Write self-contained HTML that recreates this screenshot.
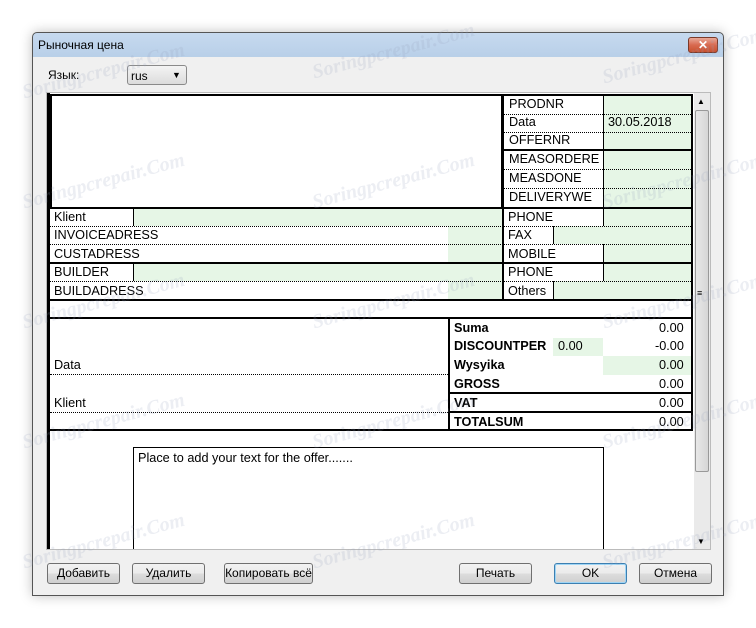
<!DOCTYPE html>
<html><head><meta charset="utf-8"><style>
*{margin:0;padding:0;box-sizing:border-box}
body{width:756px;height:628px;background:#fff;position:relative;overflow:hidden;font-family:"Liberation Sans",Arial,sans-serif;font-size:12.7px;color:#000}
.a{position:absolute}
.win{left:32px;top:32px;width:692px;height:564px;border:1px solid #555;border-radius:5px 5px 0 0;background:linear-gradient(#c6d9ef,#b8cfe8 25px,#f0f0f0 25px);box-shadow:0 0 12px rgba(0,0,0,.25)}
.t{position:absolute;white-space:nowrap;line-height:14px}
.g{position:absolute;background:#e6f6e6}
.hl{position:absolute;background:#000}
.dl{position:absolute;height:0;border-top:1px dotted #000}
.btn{position:absolute;top:563px;height:21px;border:1px solid #707070;border-radius:3px;background:linear-gradient(#f2f2f2,#ebebeb 50%,#dddddd 50%,#cfcfcf);text-align:center;line-height:19px;font-size:12px}
.wm{position:absolute;color:rgba(150,160,190,.18);font:italic bold 20px "Liberation Serif",serif;transform:rotate(-15deg);white-space:nowrap}
.b{font-weight:bold}
</style></head><body>
<div class="a win"></div>
<div class="t" style="left:38px;top:38px;font-size:12px">Рыночная цена</div>
<div class="a" style="left:688px;top:37px;width:30px;height:16px;border:1px solid #7a3a2a;border-radius:3px;background:linear-gradient(#e8a898,#d86a50 50%,#c8502e);color:#fff;font-weight:bold;text-align:center;line-height:14px;font-size:12px">✕</div>
<div class="a" style="left:33px;top:57px;width:690px;height:538px;background:#f0f0f0"></div>
<div class="t" style="left:48px;top:68px;font-size:12px">Язык:</div>
<div class="a" style="left:127px;top:65px;width:60px;height:20px;border:1px solid #8a8a8a;border-radius:3px;background:linear-gradient(#f4f4f4,#dcdcdc)"></div>
<div class="t" style="left:131px;top:69px;font-size:12px">rus</div>
<div class="t" style="left:172px;top:68px;font-size:9px">▼</div>
<div class="a" style="left:46px;top:92px;width:665px;height:458px;border:1px solid #bbb;background:#fff"></div>
<div class="a" style="left:694px;top:93px;width:16px;height:456px;background:#eaeaea"></div>
<div class="a" style="left:695px;top:110px;width:14px;height:362px;border:1px solid #999;border-radius:2px;background:linear-gradient(90deg,#e8e8e8,#d6d6d6)"></div>
<div class="t" style="left:697px;top:95px;font-size:8px">▲</div>
<div class="t" style="left:697px;top:535px;font-size:8px">▼</div>
<div class="t" style="left:697px;top:286px;font-size:9px">≡</div>
<div class="hl" style="left:47px;top:93px;width:3px;height:456px"></div>
<div class="a" style="left:50px;top:94px;width:453px;height:115px;border:2px solid #000;background:#fff"></div>
<div class="g" style="left:604px;top:95px;width:88px;height:112px"></div>
<div class="hl" style="left:502px;top:94px;width:2px;height:207px"></div>
<div class="hl" style="left:603px;top:95px;width:1px;height:112px"></div>
<div class="hl" style="left:691px;top:94px;width:2px;height:207px"></div>
<div class="hl" style="left:502px;top:94px;width:191px;height:2px"></div>
<div class="dl" style="left:504px;top:114px;width:187px"></div>
<div class="dl" style="left:504px;top:132px;width:187px"></div>
<div class="hl" style="left:502px;top:149px;width:191px;height:2px"></div>
<div class="dl" style="left:504px;top:169px;width:187px"></div>
<div class="dl" style="left:504px;top:188px;width:187px"></div>
<div class="t" style="left:509px;top:97px">PRODNR</div>
<div class="t" style="left:509px;top:115px">Data</div>
<div class="t" style="left:608px;top:115px">30.05.2018</div>
<div class="t" style="left:509px;top:133px">OFFERNR</div>
<div class="t" style="left:509px;top:152px">MEASORDERE</div>
<div class="t" style="left:509px;top:171px">MEASDONE</div>
<div class="t" style="left:509px;top:190px">DELIVERYWE</div>
<div class="hl" style="left:50px;top:207px;width:643px;height:2px"></div>
<div class="g" style="left:134px;top:209px;width:368px;height:17px"></div>
<div class="g" style="left:448px;top:226px;width:54px;height:36px"></div>
<div class="g" style="left:134px;top:264px;width:368px;height:17px"></div>
<div class="g" style="left:448px;top:281px;width:54px;height:18px"></div>
<div class="g" style="left:604px;top:209px;width:87px;height:17px"></div>
<div class="g" style="left:554px;top:226px;width:137px;height:18px"></div>
<div class="g" style="left:604px;top:244px;width:87px;height:18px"></div>
<div class="g" style="left:604px;top:264px;width:87px;height:17px"></div>
<div class="g" style="left:554px;top:281px;width:137px;height:18px"></div>
<div class="hl" style="left:133px;top:209px;width:1px;height:17px"></div>
<div class="hl" style="left:133px;top:264px;width:1px;height:17px"></div>
<div class="hl" style="left:603px;top:209px;width:1px;height:17px"></div>
<div class="hl" style="left:553px;top:226px;width:1px;height:18px"></div>
<div class="hl" style="left:603px;top:244px;width:1px;height:18px"></div>
<div class="hl" style="left:603px;top:264px;width:1px;height:17px"></div>
<div class="hl" style="left:553px;top:281px;width:1px;height:18px"></div>
<div class="dl" style="left:50px;top:226px;width:641px"></div>
<div class="dl" style="left:50px;top:244px;width:641px"></div>
<div class="hl" style="left:50px;top:262px;width:643px;height:2px"></div>
<div class="dl" style="left:50px;top:281px;width:641px"></div>
<div class="hl" style="left:50px;top:299px;width:643px;height:2px"></div>
<div class="t" style="left:54px;top:210px">Klient</div>
<div class="t" style="left:54px;top:228px">INVOICEADRESS</div>
<div class="t" style="left:54px;top:247px">CUSTADRESS</div>
<div class="t" style="left:54px;top:265px">BUILDER</div>
<div class="t" style="left:54px;top:284px">BUILDADRESS</div>
<div class="t" style="left:508px;top:210px">PHONE</div>
<div class="t" style="left:508px;top:228px">FAX</div>
<div class="t" style="left:508px;top:247px">MOBILE</div>
<div class="t" style="left:508px;top:265px">PHONE</div>
<div class="t" style="left:508px;top:284px">Others</div>
<div class="hl" style="left:691px;top:300px;width:2px;height:131px"></div>
<div class="hl" style="left:50px;top:317px;width:643px;height:2px"></div>
<div class="t" style="left:54px;top:358px">Data</div>
<div class="dl" style="left:50px;top:374px;width:398px"></div>
<div class="t" style="left:54px;top:396px">Klient</div>
<div class="dl" style="left:50px;top:412px;width:398px"></div>
<div class="hl" style="left:448px;top:318px;width:2px;height:113px"></div>
<div class="g" style="left:553px;top:338px;width:50px;height:18px"></div>
<div class="g" style="left:603px;top:356px;width:88px;height:19px"></div>
<div class="t b" style="left:454px;top:321px">Suma</div>
<div class="t" style="left:659px;top:321px">0.00</div>
<div class="t b" style="left:454px;top:339px">DISCOUNTPER</div>
<div class="t" style="left:558px;top:339px">0.00</div>
<div class="t" style="left:655px;top:339px">-0.00</div>
<div class="t b" style="left:454px;top:358px">Wysyika</div>
<div class="t" style="left:659px;top:358px">0.00</div>
<div class="t b" style="left:454px;top:377px">GROSS</div>
<div class="t" style="left:659px;top:377px">0.00</div>
<div class="hl" style="left:448px;top:392px;width:245px;height:2px"></div>
<div class="t b" style="left:454px;top:396px">VAT</div>
<div class="t" style="left:659px;top:396px">0.00</div>
<div class="hl" style="left:448px;top:411px;width:245px;height:2px"></div>
<div class="t b" style="left:454px;top:415px">TOTALSUM</div>
<div class="t" style="left:659px;top:415px">0.00</div>
<div class="hl" style="left:50px;top:429px;width:643px;height:2px"></div>
<div class="a" style="left:133px;top:447px;width:471px;height:102px;border:1px solid #000;border-bottom:none;background:#fff"></div>
<div class="t" style="left:138px;top:451px">Place to add your text for the offer.......</div>
<div class="btn" style="left:47px;width:73px">Добавить</div>
<div class="btn" style="left:132px;width:73px">Удалить</div>
<div class="btn" style="left:224px;width:89px">Копировать всё</div>
<div class="btn" style="left:459px;width:73px">Печать</div>
<div class="btn" style="left:554px;width:73px;border-color:#3c7fb1;box-shadow:inset 0 0 0 1px #9fd5f5">OK</div>
<div class="btn" style="left:639px;width:73px">Отмена</div>
<div class="wm" style="left:20px;top:60px">Soringpcrepair.Com</div>
<div class="wm" style="left:310px;top:40px">Soringpcrepair.Com</div>
<div class="wm" style="left:600px;top:45px">Soringpcrepair.Com</div>
<div class="wm" style="left:20px;top:170px">Soringpcrepair.Com</div>
<div class="wm" style="left:310px;top:170px">Soringpcrepair.Com</div>
<div class="wm" style="left:600px;top:170px">Soringpcrepair.Com</div>
<div class="wm" style="left:20px;top:290px">Soringpcrepair.Com</div>
<div class="wm" style="left:310px;top:290px">Soringpcrepair.Com</div>
<div class="wm" style="left:600px;top:290px">Soringpcrepair.Com</div>
<div class="wm" style="left:20px;top:410px">Soringpcrepair.Com</div>
<div class="wm" style="left:310px;top:410px">Soringpcrepair.Com</div>
<div class="wm" style="left:600px;top:410px">Soringpcrepair.Com</div>
<div class="wm" style="left:20px;top:530px">Soringpcrepair.Com</div>
<div class="wm" style="left:310px;top:530px">Soringpcrepair.Com</div>
<div class="wm" style="left:600px;top:530px">Soringpcrepair.Com</div>
</body></html>
